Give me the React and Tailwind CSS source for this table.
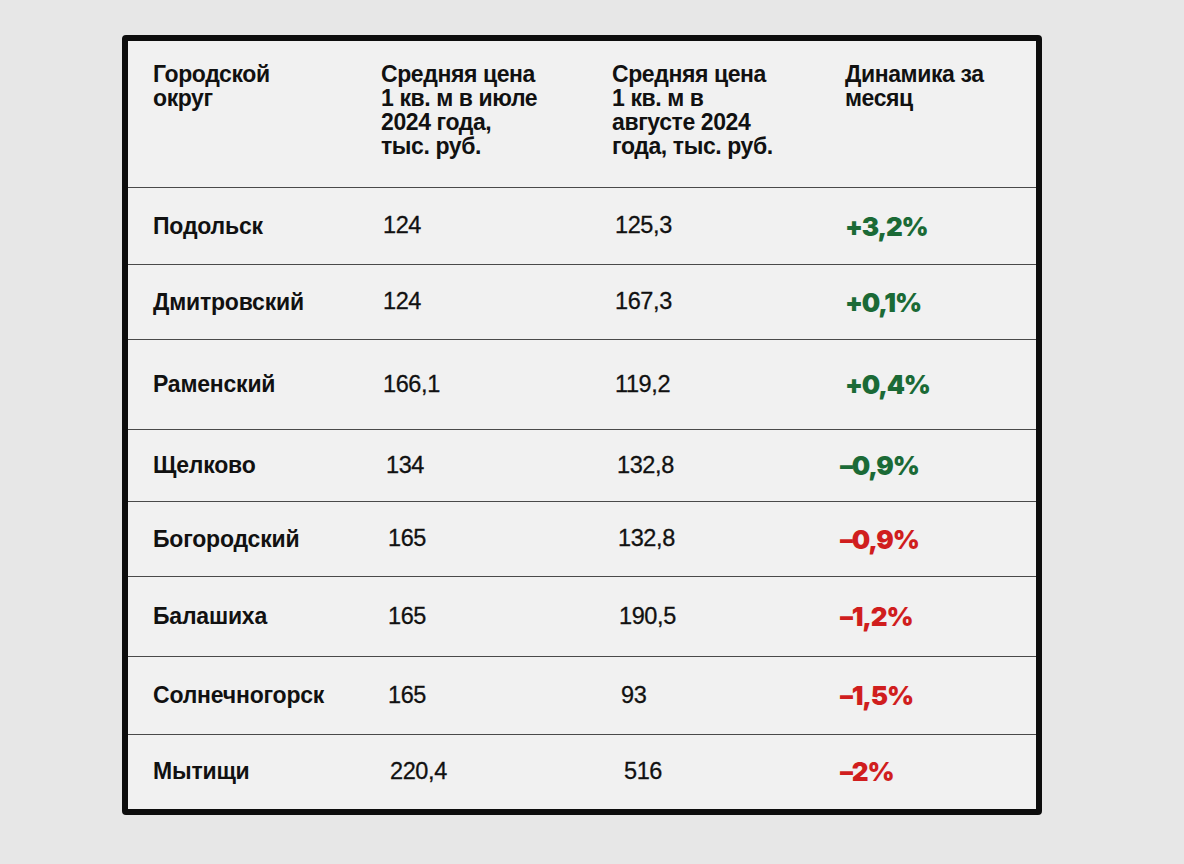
import React from 'react';

const rows = [
  { city: 'Подольск', jul: '124', aug: '125,3', dyn: '+3,2%', up: true, h: 'h-[77px]', c2: 'ml-[2px]', c3: 'ml-[3px]', c4: 'ml-[0px]' },
  { city: 'Дмитровский', jul: '124', aug: '167,3', dyn: '+0,1%', up: true, h: 'h-[75px]', c2: 'ml-[2px]', c3: 'ml-[3px]', c4: 'ml-[0px]' },
  { city: 'Раменский', jul: '166,1', aug: '119,2', dyn: '+0,4%', up: true, h: 'h-[90px]', c2: 'ml-[2px]', c3: 'ml-[3px]', c4: 'ml-[0px]' },
  { city: 'Щелково', jul: '134', aug: '132,8', dyn: '–0,9%', up: true, h: 'h-[72px]', c2: 'ml-[5px]', c3: 'ml-[5px]', c4: 'ml-[-5px]' },
  { city: 'Богородский', jul: '165', aug: '132,8', dyn: '–0,9%', up: false, h: 'h-[75px]', c2: 'ml-[7px]', c3: 'ml-[6px]', c4: 'ml-[-5px]' },
  { city: 'Балашиха', jul: '165', aug: '190,5', dyn: '–1,2%', up: false, h: 'h-[80px]', c2: 'ml-[7px]', c3: 'ml-[7px]', c4: 'ml-[-5px]' },
  { city: 'Солнечногорск', jul: '165', aug: '93', dyn: '–1,5%', up: false, h: 'h-[78px]', c2: 'ml-[7px]', c3: 'ml-[9px]', c4: 'ml-[-5px]' },
  { city: 'Мытищи', jul: '220,4', aug: '516', dyn: '–2%', up: false, h: 'h-[73px]', c2: 'ml-[9px]', c3: 'ml-[12px]', c4: 'ml-[-5px]' },
];

const headers = [
  ['Городской', 'округ'],
  ['Средняя цена', '1 кв. м в июле', '2024 года,', 'тыс. руб.'],
  ['Средняя цена', '1 кв. м в', 'августе 2024', 'года, тыс. руб.'],
  ['Динамика за', 'месяц'],
];

export default function App() {
  return (
    <div className="w-[1184px] h-[864px] bg-[#e7e7e7] pt-[35px] pl-[122px] font-['Liberation_Sans',Arial,sans-serif] text-[#111]">
      <div className="w-[920px] h-[780px] border-[6px] border-[#0d0d0d] rounded-[4px] bg-[#f1f1f1] overflow-hidden">
        <div className="h-[147px] grid grid-cols-[228px_231px_233px_1fr] pl-[25px] pt-[21px] border-b-[1.5px] border-[#4a4a4a]">
          {headers.map((lines, i) => (
            <div key={i} className="text-[23px] leading-[24px] font-bold tracking-[-0.4px]">
              {lines.map((l) => (
                <div key={l}>{l}</div>
              ))}
            </div>
          ))}
        </div>
        {rows.map((r, i) => (
          <div
            key={r.city}
            className={`${r.h} grid grid-cols-[228px_231px_233px_1fr] items-center pl-[25px] ${i < rows.length - 1 ? 'border-b-[1.5px] border-[#4a4a4a]' : ''}`}
          >
            <div className="text-[23px] font-bold tracking-[-0.2px]">{r.city}</div>
            <div className={`${r.c2} text-[23.5px] tracking-[-0.4px] [-webkit-text-stroke:0.3px_#111]`}>{r.jul}</div>
            <div className={`${r.c3} text-[23.5px] tracking-[-0.4px] [-webkit-text-stroke:0.3px_#111]`}>{r.aug}</div>
            <div
              className={`${r.c4} font-['Inter',sans-serif] font-black text-[26px] tracking-[-1.2px] ${r.up ? 'text-[#1b6a36]' : 'text-[#d01e1e]'}`}
            >
              {r.dyn}
            </div>
          </div>
        ))}
      </div>
    </div>
  );
}
